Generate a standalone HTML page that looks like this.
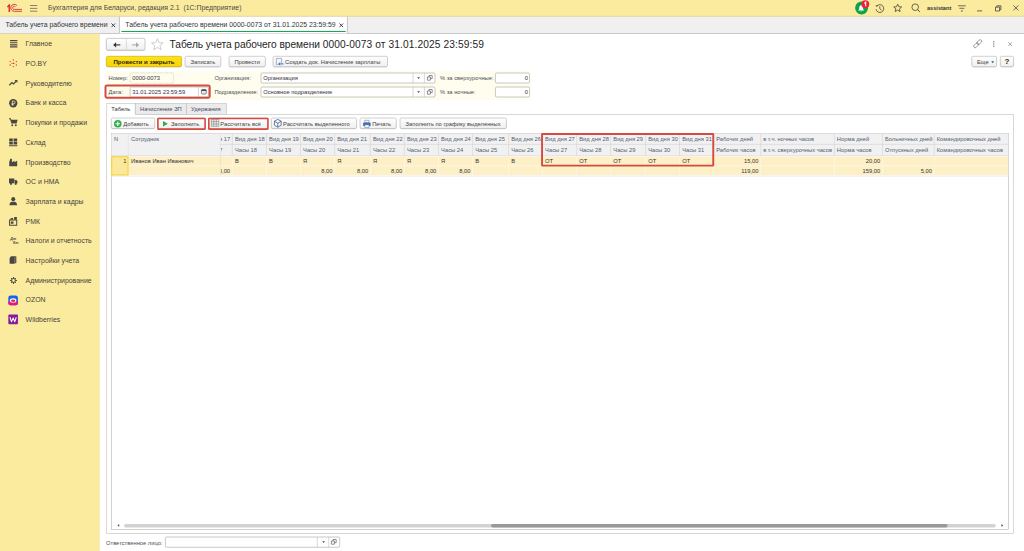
<!DOCTYPE html>
<html><head><meta charset="utf-8"><title>1C</title>
<style>
html,body{margin:0;padding:0;background:#fff;}
body{width:1024px;height:551px;overflow:hidden;position:relative;font-family:"Liberation Sans",sans-serif;}
#root{position:absolute;left:0;top:0;width:1024px;height:551px;overflow:hidden;background:#fff;}
#root div{position:absolute;box-sizing:border-box;}
.t{white-space:pre;}
svg{position:absolute;overflow:visible;}
#bgl{left:0;top:0;}
</style></head><body><div id="root">
<svg id="bgl" width="1024" height="551" viewBox="0 0 1024 551">
<defs>
<linearGradient id="bg" x1="0" y1="0" x2="0" y2="1"><stop offset="0" stop-color="#ffffff"/><stop offset="1" stop-color="#efefef"/></linearGradient>
<linearGradient id="yg" x1="0" y1="0" x2="0" y2="1"><stop offset="0" stop-color="#ffe31c"/><stop offset="1" stop-color="#f7d300"/></linearGradient>
</defs>
<rect x="0.00" y="0.00" width="1024.00" height="16.50" fill="#fbeb9f"/>
<rect x="0.00" y="16.50" width="1024.00" height="16.70" fill="#f0f0f0"/>
<rect x="119.70" y="16.70" width="227.40" height="16.50" fill="#fff"/>
<path d="M119.45 16.60L119.45 33.20" stroke="#b0b0b0" stroke-width="0.7" fill="none"/>
<path d="M347.40 16.60L347.40 33.20" stroke="#b0b0b0" stroke-width="0.7" fill="none"/>
<path d="M0.00 33.50L1024.00 33.50" stroke="#bdbdbd" stroke-width="0.8" fill="none"/>
<path d="M119.30 33.50L347.30 33.50" stroke="#e4e4e4" stroke-width="0.8" fill="none"/>
<path d="M0.00 16.30L1024.00 16.30" stroke="#dccf9b" stroke-width="0.8" fill="none"/>
<rect x="121.40" y="30.95" width="224.30" height="1.00" fill="#10a050"/>
<rect x="0.00" y="33.70" width="99.45" height="517.30" fill="#fbeb9f"/>
<path d="M99.30 33.70L99.30 551.00" stroke="#e9d98f" stroke-width="0.4" fill="none"/>
<rect x="106.40" y="39.25" width="38.50" height="11.70" fill="rgba(0,0,0,0.13)" rx="1.6"/>
<rect x="106.30" y="38.35" width="38.70" height="11.85" fill="url(#bg)" stroke="#a2a2a2" stroke-width="0.55" rx="1.5"/>
<path d="M126.40 38.70L126.40 49.90" stroke="#c4c4c4" stroke-width="0.55" fill="none"/>
<rect x="106.40" y="57.20" width="75.10" height="10.25" fill="rgba(0,0,0,0.13)" rx="1.6"/>
<rect x="106.30" y="56.30" width="75.30" height="10.40" fill="url(#yg)" stroke="#c2a000" stroke-width="0.55" rx="1.5"/>
<rect x="185.10" y="57.20" width="35.60" height="10.25" fill="rgba(0,0,0,0.13)" rx="1.6"/>
<rect x="185.00" y="56.30" width="35.80" height="10.40" fill="url(#bg)" stroke="#ababab" stroke-width="0.55" rx="1.5"/>
<rect x="229.10" y="57.20" width="36.20" height="10.25" fill="rgba(0,0,0,0.13)" rx="1.6"/>
<rect x="229.00" y="56.30" width="36.40" height="10.40" fill="url(#bg)" stroke="#ababab" stroke-width="0.55" rx="1.5"/>
<rect x="273.10" y="57.20" width="114.30" height="10.25" fill="rgba(0,0,0,0.13)" rx="1.6"/>
<rect x="273.00" y="56.30" width="114.50" height="10.40" fill="url(#bg)" stroke="#ababab" stroke-width="0.55" rx="1.5"/>
<rect x="971.90" y="57.20" width="24.60" height="10.25" fill="rgba(0,0,0,0.13)" rx="1.6"/>
<rect x="971.80" y="56.30" width="24.80" height="10.40" fill="url(#bg)" stroke="#ababab" stroke-width="0.55" rx="1.5"/>
<rect x="1000.40" y="57.20" width="13.10" height="10.25" fill="rgba(0,0,0,0.13)" rx="1.6"/>
<rect x="1000.30" y="56.30" width="13.30" height="10.40" fill="url(#bg)" stroke="#ababab" stroke-width="0.55" rx="1.5"/>
<rect x="106.30" y="71.20" width="425.10" height="28.60" fill="#fffdee"/>
<rect x="130.1" y="72.9" width="43.4" height="10.3" rx="1.3" fill="none" stroke="#b0b0a8" stroke-width="0.55" stroke-dasharray="0.6 0.6"/>
<rect x="130.10" y="87.00" width="78.30" height="10.00" fill="#fff" stroke="#9a9a9a" stroke-width="0.55" rx="1.3"/>
<path d="M198.40 87.00L198.40 97.00" stroke="#b8b8b8" stroke-width="0.55" fill="none"/>
<rect x="105.50" y="85.40" width="104.20" height="12.35" fill="none" stroke="#d64a40" stroke-width="2.0" rx="1.4"/>
<rect x="261.00" y="73.00" width="174.00" height="10.00" fill="#fff" stroke="#9a9a9a" stroke-width="0.55" rx="1.3"/>
<path d="M413.00 73.00L413.00 83.00" stroke="#b8b8b8" stroke-width="0.55" fill="none"/>
<path d="M424.40 73.00L424.40 83.00" stroke="#b8b8b8" stroke-width="0.55" fill="none"/>
<rect x="261.00" y="87.00" width="174.00" height="10.00" fill="#fff" stroke="#9a9a9a" stroke-width="0.55" rx="1.3"/>
<path d="M413.00 87.00L413.00 97.00" stroke="#b8b8b8" stroke-width="0.55" fill="none"/>
<path d="M424.40 87.00L424.40 97.00" stroke="#b8b8b8" stroke-width="0.55" fill="none"/>
<rect x="495.40" y="73.00" width="34.10" height="10.00" fill="#fff" stroke="#9a9a9a" stroke-width="0.55" rx="1.3"/>
<rect x="495.40" y="87.00" width="34.10" height="10.00" fill="#fff" stroke="#9a9a9a" stroke-width="0.55" rx="1.3"/>
<rect x="135.30" y="103.50" width="51.20" height="10.90" fill="#ebebeb" stroke="#b9b9b9" stroke-width="0.55"/>
<rect x="186.50" y="103.50" width="40.00" height="10.90" fill="#ebebeb" stroke="#b9b9b9" stroke-width="0.55"/>
<rect x="106.65" y="114.40" width="906.65" height="418.95" fill="#fff" stroke="#b9b9b9" stroke-width="0.55"/>
<rect x="106.65" y="103.50" width="28.65" height="11.70" fill="#fff"/>
<path d="M106.65 115 V103.5 H135.3 V114.4" fill="none" stroke="#b9b9b9" stroke-width="0.55"/>
<rect x="111.30" y="118.90" width="43.40" height="10.35" fill="rgba(0,0,0,0.13)" rx="1.6"/>
<rect x="111.20" y="118.00" width="43.60" height="10.50" fill="url(#bg)" stroke="#ababab" stroke-width="0.55" rx="1.5"/>
<rect x="158.10" y="118.90" width="46.80" height="10.85" fill="rgba(0,0,0,0.13)" rx="1.6"/>
<rect x="158.00" y="118.00" width="47.00" height="11.00" fill="url(#bg)" stroke="#ababab" stroke-width="0.55" rx="1.5"/>
<rect x="157.88" y="118.58" width="47.25" height="10.55" fill="none" stroke="#d64a40" stroke-width="1.55" rx="0.3"/>
<rect x="209.10" y="118.90" width="58.60" height="10.85" fill="rgba(0,0,0,0.13)" rx="1.6"/>
<rect x="209.00" y="118.00" width="58.80" height="11.00" fill="url(#bg)" stroke="#ababab" stroke-width="0.55" rx="1.5"/>
<rect x="208.78" y="118.58" width="59.15" height="10.55" fill="none" stroke="#d64a40" stroke-width="1.55" rx="0.3"/>
<rect x="271.40" y="118.90" width="85.10" height="10.35" fill="rgba(0,0,0,0.13)" rx="1.6"/>
<rect x="271.30" y="118.00" width="85.30" height="10.50" fill="url(#bg)" stroke="#ababab" stroke-width="0.55" rx="1.5"/>
<rect x="360.10" y="118.90" width="36.10" height="10.35" fill="rgba(0,0,0,0.13)" rx="1.6"/>
<rect x="360.00" y="118.00" width="36.30" height="10.50" fill="url(#bg)" stroke="#ababab" stroke-width="0.55" rx="1.5"/>
<rect x="400.10" y="118.90" width="106.20" height="10.35" fill="rgba(0,0,0,0.13)" rx="1.6"/>
<rect x="400.00" y="118.00" width="106.40" height="10.50" fill="url(#bg)" stroke="#ababab" stroke-width="0.55" rx="1.5"/>
<rect x="111.30" y="133.40" width="897.20" height="396.10" fill="#fff" stroke="#adadad" stroke-width="0.55"/>
<rect x="111.57" y="133.67" width="896.66" height="22.33" fill="#f1f1f1"/>
<rect x="111.57" y="156.00" width="896.66" height="0.70" fill="#f7f4ea"/>
<rect x="111.57" y="156.70" width="896.66" height="18.55" fill="#fdefc6"/>
<rect x="111.57" y="175.25" width="896.66" height="1.70" fill="#f3f3f3"/>
<path d="M128.30 133.70L128.30 156.00" stroke="#cfcfcf" stroke-width="0.55" fill="none" stroke-dasharray="0.7 0.6"/>
<path d="M220.40 133.70L220.40 156.00" stroke="#cfcfcf" stroke-width="0.55" fill="none" stroke-dasharray="0.7 0.6"/>
<path d="M220.40 156.00L220.40 175.25" stroke="#c9c2a8" stroke-width="0.55" fill="none" stroke-dasharray="0.7 0.6"/>
<path d="M232.30 133.70L232.30 156.00" stroke="#cfcfcf" stroke-width="0.55" fill="none"/>
<path d="M232.30 156.70L232.30 175.25" stroke="#fff8e2" stroke-width="0.8" fill="none"/>
<path d="M266.50 133.70L266.50 156.00" stroke="#cfcfcf" stroke-width="0.55" fill="none"/>
<path d="M266.50 156.70L266.50 175.25" stroke="#fff8e2" stroke-width="0.8" fill="none"/>
<path d="M300.45 133.70L300.45 156.00" stroke="#cfcfcf" stroke-width="0.55" fill="none"/>
<path d="M300.45 156.70L300.45 175.25" stroke="#fff8e2" stroke-width="0.8" fill="none"/>
<path d="M334.60 133.70L334.60 156.00" stroke="#cfcfcf" stroke-width="0.55" fill="none"/>
<path d="M334.60 156.70L334.60 175.25" stroke="#fff8e2" stroke-width="0.8" fill="none"/>
<path d="M370.40 133.70L370.40 156.00" stroke="#cfcfcf" stroke-width="0.55" fill="none"/>
<path d="M370.40 156.70L370.40 175.25" stroke="#fff8e2" stroke-width="0.8" fill="none"/>
<path d="M404.40 133.70L404.40 156.00" stroke="#cfcfcf" stroke-width="0.55" fill="none"/>
<path d="M404.40 156.70L404.40 175.25" stroke="#fff8e2" stroke-width="0.8" fill="none"/>
<path d="M438.50 133.70L438.50 156.00" stroke="#cfcfcf" stroke-width="0.55" fill="none"/>
<path d="M438.50 156.70L438.50 175.25" stroke="#fff8e2" stroke-width="0.8" fill="none"/>
<path d="M472.60 133.70L472.60 156.00" stroke="#cfcfcf" stroke-width="0.55" fill="none"/>
<path d="M472.60 156.70L472.60 175.25" stroke="#fff8e2" stroke-width="0.8" fill="none"/>
<path d="M508.65 133.70L508.65 156.00" stroke="#cfcfcf" stroke-width="0.55" fill="none"/>
<path d="M508.65 156.70L508.65 175.25" stroke="#fff8e2" stroke-width="0.8" fill="none"/>
<path d="M542.50 133.70L542.50 156.00" stroke="#cfcfcf" stroke-width="0.55" fill="none"/>
<path d="M542.50 156.70L542.50 175.25" stroke="#fff8e2" stroke-width="0.8" fill="none"/>
<path d="M576.65 133.70L576.65 156.00" stroke="#cfcfcf" stroke-width="0.55" fill="none"/>
<path d="M576.65 156.70L576.65 175.25" stroke="#fff8e2" stroke-width="0.8" fill="none"/>
<path d="M610.70 133.70L610.70 156.00" stroke="#cfcfcf" stroke-width="0.55" fill="none"/>
<path d="M610.70 156.70L610.70 175.25" stroke="#fff8e2" stroke-width="0.8" fill="none"/>
<path d="M645.55 133.70L645.55 156.00" stroke="#cfcfcf" stroke-width="0.55" fill="none"/>
<path d="M645.55 156.70L645.55 175.25" stroke="#fff8e2" stroke-width="0.8" fill="none"/>
<path d="M679.55 133.70L679.55 156.00" stroke="#cfcfcf" stroke-width="0.55" fill="none"/>
<path d="M679.55 156.70L679.55 175.25" stroke="#fff8e2" stroke-width="0.8" fill="none"/>
<path d="M713.70 133.70L713.70 156.00" stroke="#cfcfcf" stroke-width="0.55" fill="none"/>
<path d="M713.70 156.70L713.70 175.25" stroke="#fff8e2" stroke-width="0.8" fill="none"/>
<path d="M760.70 133.70L760.70 156.00" stroke="#cfcfcf" stroke-width="0.55" fill="none"/>
<path d="M760.70 156.70L760.70 175.25" stroke="#fff8e2" stroke-width="0.8" fill="none"/>
<path d="M834.40 133.70L834.40 156.00" stroke="#cfcfcf" stroke-width="0.55" fill="none"/>
<path d="M834.40 156.70L834.40 175.25" stroke="#fff8e2" stroke-width="0.8" fill="none"/>
<path d="M882.50 133.70L882.50 156.00" stroke="#cfcfcf" stroke-width="0.55" fill="none"/>
<path d="M882.50 156.70L882.50 175.25" stroke="#fff8e2" stroke-width="0.8" fill="none"/>
<path d="M934.30 133.70L934.30 156.00" stroke="#cfcfcf" stroke-width="0.55" fill="none"/>
<path d="M934.30 156.70L934.30 175.25" stroke="#fff8e2" stroke-width="0.8" fill="none"/>
<path d="M220.40 144.40L1008.20 144.40" stroke="#cfcfcf" stroke-width="0.55" fill="none"/>
<path d="M111.60 155.50L1008.20 155.50" stroke="#dcdcdc" stroke-width="0.55" fill="none"/>
<path d="M128.30 165.85L1008.20 165.85" stroke="#fef5d9" stroke-width="1.3" fill="none"/>
<rect x="111.75" y="156.75" width="16.30" height="18.20" fill="#fbe89c" stroke="#f8d017" stroke-width="0.9"/>
<rect x="542.05" y="133.95" width="171.20" height="31.70" fill="none" stroke="#d64a40" stroke-width="1.9" rx="0.4"/>
<rect x="124.00" y="524.05" width="871.80" height="3.55" fill="#d2d2d2" rx="1.8"/>
<rect x="491.00" y="524.05" width="456.60" height="3.55" fill="#999" rx="1.8"/>
<rect x="165.40" y="537.00" width="174.30" height="10.25" fill="#fff" stroke="#9a9a9a" stroke-width="0.55" rx="1.3"/>
<path d="M317.30 537.00L317.30 547.25" stroke="#b8b8b8" stroke-width="0.55" fill="none"/>
<path d="M328.70 537.00L328.70 547.25" stroke="#b8b8b8" stroke-width="0.55" fill="none"/>
</svg>
<svg style="left:0;top:0" width="40" height="17" viewBox="0 0 40 17">
<path d="M6.9 6.7 L8.8 4.2 H10.1 V11.9 H8.5 V6.9 L7.6 7.6 Z" fill="#d9363a"/>
<path d="M16.98 5.55 A3.5 3.5 0 1 0 14.3 11.3 H22" stroke="#d9363a" stroke-width="0.95" fill="none"/>
<path d="M15.53 6.77 A1.6 1.6 0 1 0 14.3 9.4 H22" stroke="#d9363a" stroke-width="0.95" fill="none"/>
<path d="M30 5.5H37.3M30 8.4H37.3M30 11.2H37.3" stroke="#6e6650" stroke-width="0.8"/>
</svg>
<div class="t" style="left:48.00px;top:3px;font-size:6.93px;line-height:10px;color:#4a4a44;font-weight:normal;">Бухгалтерия для Беларуси, редакция 2.1  (1С:Предприятие)</div>
<svg style="left:0;top:0" width="1024" height="17" viewBox="0 0 1024 17">
<circle cx="861.6" cy="7.95" r="6.5" fill="#12a04b"/>
<path d="M861.1 5.2 C859.6 5.2 859.3 6.8 859.3 8.0 C859.3 9.2 858.6 9.8 858.0 10.4 H864.3 C863.7 9.8 863.0 9.2 863.0 8.0 C863.0 6.8 862.6 5.2 861.1 5.2 Z M860.3 11.0 A0.9 0.9 0 0 0 861.9 11.0 Z" fill="#fff"/>
<circle cx="865.35" cy="4.2" r="3.85" fill="#ee2038"/>
<path d="M864.3 3.4 L865.7 2.2 V6.3" stroke="#fff" stroke-width="1.05" fill="none"/>
<g transform="translate(875,3.8)"><path d="M1.6 2.6 A3.9 3.9 0 1 1 1.0 5.4" stroke="#463f33" stroke-width="0.8" fill="none"/>
<path d="M0.4 1.4 L1.7 3.0 L3.3 1.9 Z" fill="#463f33"/>
<path d="M4.8 2.6 V4.9 L6.5 6.3" stroke="#463f33" stroke-width="0.8" fill="none"/></g>
<g transform="translate(893.1,3.55) scale(0.88)"><path d="M5.2 0.7 L6.5 3.6 L9.7 3.9 L7.3 6.0 L8.0 9.1 L5.2 7.5 L2.4 9.1 L3.1 6.0 L0.7 3.9 L3.9 3.6 Z" stroke="#463f33" stroke-width="0.9" fill="none" stroke-linejoin="round"/></g>
</svg>
<svg style="left:911px;top:3.2px" width="10" height="10" viewBox="0 0 10 10">
<circle cx="4.2" cy="4.2" r="3.3" stroke="#444" stroke-width="0.8" fill="none"/>
<path d="M6.6 6.6 L8.8 8.8" stroke="#444" stroke-width="1"/>
</svg>
<div class="t" style="left:927.00px;top:4px;font-size:5.6px;line-height:8px;color:#333;font-weight:bold;">assistant</div>
<svg style="left:957.8px;top:5.0px" width="9" height="9" viewBox="0 0 9 9">
<path d="M0 0.8H7.8M1.4 3.3H6.4" stroke="#444" stroke-width="0.75"/>
<path d="M2.8 5.4 H5.0 L3.9 6.9 Z" fill="#444"/>
</svg>
<svg style="left:977px;top:9.8px" width="6" height="2" viewBox="0 0 6 2"><path d="M0 0.9H5.2" stroke="#444" stroke-width="0.8"/></svg>
<svg style="left:994.6px;top:4.6px" width="7" height="7" viewBox="0 0 7 7">
<path d="M0.5 2.1 H4.6 V6.0 H0.5 Z M1.8 2.1 V0.8 H5.9 V4.7 H4.6" stroke="#444" stroke-width="0.8" fill="none"/></svg>
<svg style="left:1013px;top:5px" width="6" height="6" viewBox="0 0 6 6"><path d="M0.4 0.4 L5.4 5.4 M5.4 0.4 L0.4 5.4" stroke="#444" stroke-width="0.8"/></svg>
<div class="t" style="left:5.40px;top:20px;font-size:6.87px;line-height:10px;color:#333;font-weight:normal;">Табель учета рабочего времени</div>
<svg style="left:110.9px;top:22.5px" width="5" height="5" viewBox="0 0 5 5"><path d="M0.5 0.5L4.1 4.1M4.1 0.5L0.5 4.1" stroke="#3a3a3a" stroke-width="0.95"/></svg>
<div class="t" style="left:125.30px;top:20px;font-size:6.87px;line-height:10px;color:#333;font-weight:normal;">Табель учета рабочего времени 0000-0073 от 31.01.2025 23:59:59</div>
<svg style="left:338.9px;top:22.7px" width="5" height="5" viewBox="0 0 5 5"><path d="M0.5 0.5L4.1 4.1M4.1 0.5L0.5 4.1" stroke="#3a3a3a" stroke-width="0.95"/></svg>
<svg style="left:9.90px;top:40.00px" width="8.00" height="8.00" viewBox="0 0 8 8"><path d="M0 0.6H7.4M0 2.7H7.4M0 4.8H7.4M0 6.9H7.4" stroke="#4a4742" stroke-width="1.15"/></svg>
<div class="t" style="left:25.60px;top:39px;font-size:6.93px;line-height:10px;color:#45433c;font-weight:normal;">Главное</div>
<svg style="left:9.14px;top:59.23px" width="8.96" height="8.96" viewBox="0 0 8 8"><g fill="#d23b30"><circle cx="3.8" cy="3.8" r="0.75"/><circle cx="3.8" cy="0.9" r="0.6"/><circle cx="3.8" cy="6.8" r="0.6"/><circle cx="1" cy="2.3" r="0.6"/><circle cx="6.6" cy="2.3" r="0.6"/><circle cx="1" cy="5.4" r="0.6"/><circle cx="6.6" cy="5.4" r="0.6"/><circle cx="2.4" cy="3.8" r="0.4"/><circle cx="5.2" cy="3.8" r="0.4"/></g></svg>
<div class="t" style="left:25.60px;top:59px;font-size:6.93px;line-height:10px;color:#45433c;font-weight:normal;">PO.BY</div>
<svg style="left:9.14px;top:78.92px" width="8.96" height="8.96" viewBox="0 0 8 8"><path d="M0.3 5.6 L2.6 3.2 L4.0 4.4 L6.8 1.6" stroke="#4a4742" stroke-width="1.1" fill="none"/><path d="M4.9 1.0 H7.5 V3.6 Z" fill="#4a4742"/></svg>
<div class="t" style="left:25.60px;top:79px;font-size:6.93px;line-height:10px;color:#45433c;font-weight:normal;">Руководителю</div>
<svg style="left:9.14px;top:98.61px" width="8.96" height="8.96" viewBox="0 0 8 8"><circle cx="3.8" cy="3.8" r="3.7" fill="#4a4742"/><path d="M3.0 6.0 V1.9 H4.3 A1.15 1.15 0 0 1 4.3 4.2 H2.3 M2.3 5.1 H4.3" stroke="#fbeb9f" stroke-width="0.7" fill="none"/></svg>
<div class="t" style="left:25.60px;top:98px;font-size:6.93px;line-height:10px;color:#45433c;font-weight:normal;">Банк и касса</div>
<svg style="left:9.14px;top:118.30px" width="8.96" height="8.96" viewBox="0 0 8 8"><path d="M0 0.7 H1.3 L1.8 2.2" stroke="#4a4742" stroke-width="0.9" fill="none"/><path d="M1.2 1.5 H7.7 L6.8 5.0 H2.1 Z" fill="#4a4742"/><circle cx="2.9" cy="6.5" r="0.85" fill="#4a4742"/><circle cx="6.1" cy="6.5" r="0.85" fill="#4a4742"/></svg>
<div class="t" style="left:25.60px;top:118px;font-size:6.93px;line-height:10px;color:#45433c;font-weight:normal;">Покупки и продажи</div>
<svg style="left:9.14px;top:137.99px" width="8.96" height="8.96" viewBox="0 0 8 8"><path d="M0.2 0.4H3.4V2.8H0.2Z M4.1 0.4H7.3V2.8H4.1Z M0.2 3.4H3.4V5.8H0.2Z M4.1 3.4H7.3V5.8H4.1Z M0 6.5H7.5V7.4H0Z" fill="#4a4742"/></svg>
<div class="t" style="left:25.60px;top:138px;font-size:6.93px;line-height:10px;color:#45433c;font-weight:normal;">Склад</div>
<svg style="left:9.14px;top:157.68px" width="8.96" height="8.96" viewBox="0 0 8 8"><path d="M0.2 7.3 V3.6 L1.2 0.6 H2.6 V3.8 L4.8 2.4 V3.8 L7.3 2.4 V7.3 Z" fill="#4a4742"/></svg>
<div class="t" style="left:25.60px;top:158px;font-size:6.93px;line-height:10px;color:#45433c;font-weight:normal;">Производство</div>
<svg style="left:9.14px;top:177.37px" width="8.96" height="8.96" viewBox="0 0 8 8"><path d="M0 1.4 H4.8 V5.6 H0 Z M5.2 2.6 H6.6 L7.6 4.0 V5.6 H5.2 Z" fill="#4a4742"/><circle cx="1.8" cy="6.1" r="1" fill="#4a4742"/><circle cx="6.0" cy="6.1" r="1" fill="#4a4742"/></svg>
<div class="t" style="left:25.60px;top:177px;font-size:6.93px;line-height:10px;color:#45433c;font-weight:normal;">ОС и НМА</div>
<svg style="left:9.14px;top:197.06px" width="8.96" height="8.96" viewBox="0 0 8 8"><circle cx="3.8" cy="1.9" r="1.8" fill="#4a4742"/><path d="M0.4 7.3 C0.4 4.6 2.2 4.2 3.8 4.2 C5.4 4.2 7.2 4.6 7.2 7.3 Z" fill="#4a4742"/></svg>
<div class="t" style="left:25.60px;top:197px;font-size:6.93px;line-height:10px;color:#45433c;font-weight:normal;">Зарплата и кадры</div>
<svg style="left:9.14px;top:216.75px" width="8.96" height="8.96" viewBox="0 0 8 8"><path d="M0.5 2.6 H6.9 V7.4 H0.5 Z" stroke="#4a4742" stroke-width="0.9" fill="none"/><path d="M1.4 2.4 V1.0 H3.6 V2.4 M4.6 0 H7.0 V2.4 H4.6Z M1.6 4 H4 V6 H1.6Z" fill="#4a4742"/></svg>
<div class="t" style="left:25.60px;top:217px;font-size:6.93px;line-height:10px;color:#45433c;font-weight:normal;">РМК</div>
<svg style="left:9.60px;top:236.90px" width="8.00" height="8.00" viewBox="0 0 8 8"><text x="0.3" y="3.4" font-size="3.6" font-family="Liberation Sans" font-weight="bold" font-style="italic" fill="#4a4742">Дт</text><text x="3.0" y="7.4" font-size="3.6" font-family="Liberation Sans" font-weight="bold" font-style="italic" fill="#4a4742">Кт</text></svg>
<div class="t" style="left:25.60px;top:236px;font-size:6.93px;line-height:10px;color:#45433c;font-weight:normal;">Налоги и отчетность</div>
<svg style="left:9.41px;top:256.40px" width="8.40" height="8.40" viewBox="0 0 8 8"><path d="M0.6 1.8 L2.0 0.3 H7.0 V6.0 L5.6 7.5 H0.6 Z" fill="#4a4742"/><path d="M5.6 1.8 V7.5 M5.6 1.8 L7.0 0.3" stroke="#fbeb9f" stroke-width="0.35"/></svg>
<div class="t" style="left:25.60px;top:256px;font-size:6.93px;line-height:10px;color:#45433c;font-weight:normal;">Настройки учета</div>
<svg style="left:9.90px;top:276.58px" width="7.36" height="7.36" viewBox="0 0 8 8"><circle cx="3.8" cy="3.8" r="2.1" stroke="#4a4742" stroke-width="1.1" fill="none"/><path d="M3.8 0 V1.4 M3.8 6.2 V7.6 M0 3.8 H1.4 M6.2 3.8 H7.6 M1.1 1.1 L2.1 2.1 M5.5 5.5 L6.5 6.5 M1.1 6.5 L2.1 5.5 M5.5 2.1 L6.5 1.1" stroke="#4a4742" stroke-width="1.05"/></svg>
<div class="t" style="left:25.60px;top:276px;font-size:6.93px;line-height:10px;color:#45433c;font-weight:normal;">Администрирование</div>
<svg style="left:9.14px;top:295.51px" width="8.96" height="8.96" viewBox="0 0 8 8"><rect x="-0.6" y="-0.4" width="8.6" height="8.6" rx="2" fill="#1565e6"/><path d="M-0.6 5.2 H8 V6.2 A2 2 0 0 1 6 8.2 H1.4 A2 2 0 0 1 -0.6 6.2Z" fill="#f1117e"/><ellipse cx="3.7" cy="4.1" rx="2.9" ry="2.0" fill="#fff"/><ellipse cx="3.7" cy="4.3" rx="1.9" ry="1.1" fill="#e8283c"/></svg>
<div class="t" style="left:25.60px;top:295px;font-size:6.93px;line-height:10px;color:#45433c;font-weight:normal;">OZON</div>
<svg style="left:9.14px;top:315.20px" width="8.96" height="8.96" viewBox="0 0 8 8"><rect x="-0.6" y="-0.4" width="8.6" height="8.6" rx="0.8" fill="#8a1a9b"/><path d="M0.9 2.0 L2.2 6.0 L3.7 2.6 L5.2 6.0 L6.5 2.0" stroke="#fff" stroke-width="0.9" fill="none" stroke-linejoin="round"/></svg>
<div class="t" style="left:25.60px;top:315px;font-size:6.93px;line-height:10px;color:#45433c;font-weight:normal;">Wildberries</div>
<svg style="left:112.5px;top:41.6px" width="8" height="6" viewBox="0 0 8 6"><path d="M7.3 2.9 H1.2" stroke="#3a3530" stroke-width="1.15"/><path d="M3.1 0.2 L0.1 2.9 L3.1 5.6 Z" fill="#3a3530"/></svg>
<svg style="left:132px;top:41.6px" width="8" height="6" viewBox="0 0 8 6"><path d="M0.1 2.9 H5.6" stroke="#a3a3a3" stroke-width="1.0"/><path d="M4.1 0.3 L7.0 2.9 L4.1 5.5 Z" fill="#a3a3a3"/></svg>
<svg style="left:151.2px;top:38.1px" width="12.9" height="12.9" viewBox="0 0 12 12"><path d="M5.9 0.7 L7.4 4.3 L11.3 4.6 L8.3 7.1 L9.3 10.9 L5.9 8.8 L2.5 10.9 L3.5 7.1 L0.5 4.6 L4.4 4.3 Z" stroke="#bdbdbd" stroke-width="0.68" fill="#fff" stroke-linejoin="round"/></svg>
<div class="t" style="left:169.60px;top:38px;font-size:10.2px;line-height:14px;color:#1e1e1e;font-weight:normal;"><span style="letter-spacing:-0.047px">Табель учета рабочего времени </span><span style="letter-spacing:0.106px">0000-0073 от 31.01.2025 23:59:59</span></div>
<svg style="left:973.4px;top:39.4px" width="10" height="10" viewBox="0 0 10 10">
<g transform="rotate(-45 4.7 4.7)" fill="none" stroke="#6e6e6e" stroke-width="0.65">
<rect x="-0.3" y="3.2" width="5.6" height="3.0" rx="1.5"/><rect x="4.1" y="3.2" width="5.6" height="3.0" rx="1.5"/></g></svg>
<svg style="left:993px;top:41px" width="2" height="7" viewBox="0 0 2 7"><path d="M0.8 0.2V1.6M0.8 2.4V3.8M0.8 4.6V6" stroke="#666" stroke-width="0.9"/></svg>
<svg style="left:1007.8px;top:42px" width="5" height="5" viewBox="0 0 5 5"><path d="M0.3 0.3L4 4M4 0.3L0.3 4" stroke="#777" stroke-width="0.65"/></svg>
<div class="t" style="left:106.30px;width:75.30px;top:58px;font-size:6.1px;line-height:8px;color:#2a2410;font-weight:bold;text-align:center;">Провести и закрыть</div>
<div class="t" style="left:185.00px;width:35.80px;top:58px;font-size:5.78px;line-height:8px;color:#3f3f3f;font-weight:normal;text-align:center;">Записать</div>
<div class="t" style="left:229.00px;width:36.40px;top:58px;font-size:5.78px;line-height:8px;color:#3f3f3f;font-weight:normal;text-align:center;">Провести</div>
<div class="t" style="left:285.00px;top:58px;font-size:5.78px;line-height:8px;color:#3f3f3f;font-weight:normal;">Создать док. Начисление зарплаты</div>
<svg style="left:275.6px;top:57.6px" width="8" height="8" viewBox="0 0 8 8"><path d="M0.4 0.4 H5.6 V5.0 M0.4 0.4 V6.6 H2.4" stroke="#8a97a8" stroke-width="0.7" fill="#f4f7fb"/><path d="M7.6 5.9 H3.0" stroke="#1769d6" stroke-width="0.9"/><path d="M4.2 4.6 L2.6 5.9 L4.2 7.2" stroke="#1769d6" stroke-width="0.9" fill="none"/></svg>
<div class="t" style="left:977.00px;top:58px;font-size:5.78px;line-height:8px;color:#3f3f3f;font-weight:normal;">Еще</div>
<svg style="left:990.6px;top:60.6px" width="4" height="3" viewBox="0 0 4 3"><path d="M0.2 0.3 H3.2 L1.7 2.2 Z" fill="#555"/></svg>
<div class="t" style="left:1000.30px;width:13.30px;top:57px;font-size:8px;line-height:10px;color:#2b2418;font-weight:bold;text-align:center;">?</div>
<div class="t" style="left:108.50px;top:74px;font-size:5.78px;line-height:8px;color:#4a4f5a;font-weight:normal;">Номер:</div>
<div class="t" style="left:132.30px;top:74px;font-size:5.78px;line-height:8px;color:#333;font-weight:normal;">0000-0073</div>
<div class="t" style="left:108.50px;top:88px;font-size:5.78px;line-height:8px;color:#4a4f5a;font-weight:normal;">Дата:</div>
<div class="t" style="left:132.30px;top:88px;font-size:5.78px;line-height:8px;color:#333;font-weight:normal;">31.01.2025 23:59:59</div>
<svg style="left:201.3px;top:89.30px" width="6" height="6" viewBox="0 0 6 6"><rect x="0.4" y="0.4" width="4.9" height="4.6" rx="0.9" fill="#e9e9e9" stroke="#5a5a5a" stroke-width="0.7"/><path d="M0.4 1.3 A0.9 0.9 0 0 1 1.3 0.4 H4.4 A0.9 0.9 0 0 1 5.3 1.3 V1.9 H0.4 Z" fill="#4a4a4a"/></svg>
<div class="t" style="left:214.40px;top:74px;font-size:5.78px;line-height:8px;color:#4a4f5a;font-weight:normal;">Организация:</div>
<div class="t" style="left:263.20px;top:74px;font-size:5.78px;line-height:8px;color:#333;font-weight:normal;">Организация</div>
<svg style="left:417.30px;top:77.20px" width="4" height="3" viewBox="0 0 4 3"><path d="M0.2 0.2 H3.0 L1.6 2.0 Z" fill="#444"/></svg>
<svg style="left:427.00px;top:75.20px" width="6" height="6" viewBox="0 0 6 6"><path d="M0.4 2.0 H3.4 V5.2 H0.4 Z M2.0 2.0 V0.5 H5.2 V3.6 H3.4" stroke="#555" stroke-width="0.65" fill="none"/></svg>
<div class="t" style="left:214.40px;top:88px;font-size:5.78px;line-height:8px;color:#4a4f5a;font-weight:normal;">Подразделение:</div>
<div class="t" style="left:263.20px;top:88px;font-size:5.78px;line-height:8px;color:#333;font-weight:normal;">Основное подразделение</div>
<svg style="left:417.30px;top:91.20px" width="4" height="3" viewBox="0 0 4 3"><path d="M0.2 0.2 H3.0 L1.6 2.0 Z" fill="#444"/></svg>
<svg style="left:427.00px;top:89.20px" width="6" height="6" viewBox="0 0 6 6"><path d="M0.4 2.0 H3.4 V5.2 H0.4 Z M2.0 2.0 V0.5 H5.2 V3.6 H3.4" stroke="#555" stroke-width="0.65" fill="none"/></svg>
<div class="t" style="left:440.00px;top:74px;font-size:5.78px;line-height:8px;color:#4a4f5a;font-weight:normal;">% за сверхурочные:</div>
<div class="t" style="right:496.10px;top:74px;font-size:5.78px;line-height:8px;color:#333;font-weight:normal;text-align:right;">0</div>
<div class="t" style="left:440.00px;top:88px;font-size:5.78px;line-height:8px;color:#4a4f5a;font-weight:normal;">% за ночные:</div>
<div class="t" style="right:496.10px;top:88px;font-size:5.78px;line-height:8px;color:#333;font-weight:normal;text-align:right;">0</div>
<div class="t" style="left:111.20px;top:105px;font-size:5.78px;line-height:8px;color:#333;font-weight:normal;">Табель</div>
<div class="t" style="left:140.00px;top:105px;font-size:5.78px;line-height:8px;color:#3f4860;font-weight:normal;">Начисление ЗП</div>
<div class="t" style="left:191.10px;top:105px;font-size:5.78px;line-height:8px;color:#3f4860;font-weight:normal;">Удержания</div>
<div class="t" style="left:123.20px;top:120px;font-size:5.78px;line-height:8px;color:#3f3f3f;font-weight:normal;">Добавить</div>
<svg style="left:113.95px;top:119.6px" width="8" height="8" viewBox="0 0 8 8"><circle cx="3.8" cy="3.8" r="3.75" fill="#2fae4a"/><path d="M3.8 1.6V6M1.6 3.8H6" stroke="#fff" stroke-width="1.1"/></svg>
<div class="t" style="left:170.90px;top:120px;font-size:5.78px;line-height:8px;color:#3f3f3f;font-weight:normal;">Заполнить</div>
<svg style="left:163.1px;top:121.1px" width="5" height="6" viewBox="0 0 5 6"><path d="M0 0.1 L4.9 2.75 L0 5.4 Z" fill="#2fae4a"/></svg>
<div class="t" style="left:220.30px;top:120px;font-size:5.78px;line-height:8px;color:#3f3f3f;font-weight:normal;">Рассчитать всё</div>
<svg style="left:210.9px;top:118.9px" width="8" height="8" viewBox="0 0 8 8"><path d="M0 0.4H8V7.4H0Z" fill="#ececec"/><path d="M0 0.5H8M0 2.6H8M0 5H8M0 7.3H8M0.3 0.4V7.4M2.8 0.4V7.4M5.3 0.4V7.4M7.8 0.4V7.4" stroke="#777" stroke-width="0.5"/></svg>
<div class="t" style="left:283.00px;top:120px;font-size:5.78px;line-height:8px;color:#3f3f3f;font-weight:normal;">Рассчитать выделенного</div>
<svg style="left:273.6px;top:119.2px" width="8" height="9" viewBox="0 0 8 9"><path d="M3.8 0.4 L7.2 2.2 V6.2 L3.8 8.2 L0.4 6.2 V2.2 Z M0.4 2.2 L3.8 4.2 L7.2 2.2 M3.8 4.2 V8.2" stroke="#3f5f8a" stroke-width="0.8" fill="#f5f8fc" stroke-linejoin="round"/></svg>
<div class="t" style="left:372.20px;top:120px;font-size:5.78px;line-height:8px;color:#3f3f3f;font-weight:normal;">Печать</div>
<svg style="left:362.8px;top:119.6px" width="8" height="8" viewBox="0 0 8 8"><path d="M1.8 0.3 H6.0 V2.6 H1.8 Z" fill="#fff" stroke="#3e6aa8" stroke-width="0.5"/><path d="M0.2 2.6 H7.6 V6.0 H0.2 Z" fill="#3e6aa8"/><path d="M1.8 4.8 H6.0 V7.4 H1.8 Z" fill="#fff" stroke="#3e6aa8" stroke-width="0.5"/></svg>
<div class="t" style="left:405.60px;top:120px;font-size:5.78px;line-height:8px;color:#3f3f3f;font-weight:normal;">Заполнить по графику выделенных</div>
<div class="t" style="left:114.00px;top:135px;font-size:5.78px;line-height:8px;color:#535d73;font-weight:normal;">N</div>
<div class="t" style="left:131.00px;top:135px;font-size:5.78px;line-height:8px;color:#535d73;font-weight:normal;">Сотрудник</div>
<div style="left:220.5px;top:133px;width:11.75px;height:43px;overflow:hidden;"><div class="t" style="left:-20.06px;top:2px;font-size:5.78px;line-height:8px;color:#535d73">Вид дня 17</div><div class="t" style="left:-20.06px;top:13px;font-size:5.78px;line-height:8px;color:#535d73">Часы 17</div><div class="t" style="right:2.2px;top:34px;font-size:5.78px;line-height:8px;color:#333">8,00</div></div>
<div class="t" style="left:234.90px;top:135px;font-size:5.78px;line-height:8px;color:#535d73;font-weight:normal;">Вид дня 18</div>
<div class="t" style="left:234.90px;top:146px;font-size:5.78px;line-height:8px;color:#535d73;font-weight:normal;">Часы 18</div>
<div class="t" style="left:234.90px;top:157px;font-size:5.78px;line-height:8px;color:#333;font-weight:normal;">В</div>
<div class="t" style="left:269.10px;top:135px;font-size:5.78px;line-height:8px;color:#535d73;font-weight:normal;">Вид дня 19</div>
<div class="t" style="left:269.10px;top:146px;font-size:5.78px;line-height:8px;color:#535d73;font-weight:normal;">Часы 19</div>
<div class="t" style="left:269.10px;top:157px;font-size:5.78px;line-height:8px;color:#333;font-weight:normal;">В</div>
<div class="t" style="left:303.05px;top:135px;font-size:5.78px;line-height:8px;color:#535d73;font-weight:normal;">Вид дня 20</div>
<div class="t" style="left:303.05px;top:146px;font-size:5.78px;line-height:8px;color:#535d73;font-weight:normal;">Часы 20</div>
<div class="t" style="left:303.05px;top:157px;font-size:5.78px;line-height:8px;color:#333;font-weight:normal;">Я</div>
<div class="t" style="right:691.60px;top:167px;font-size:5.78px;line-height:8px;color:#333;font-weight:normal;text-align:right;">8,00</div>
<div class="t" style="left:337.20px;top:135px;font-size:5.78px;line-height:8px;color:#535d73;font-weight:normal;">Вид дня 21</div>
<div class="t" style="left:337.20px;top:146px;font-size:5.78px;line-height:8px;color:#535d73;font-weight:normal;">Часы 21</div>
<div class="t" style="left:337.20px;top:157px;font-size:5.78px;line-height:8px;color:#333;font-weight:normal;">Я</div>
<div class="t" style="right:655.80px;top:167px;font-size:5.78px;line-height:8px;color:#333;font-weight:normal;text-align:right;">8,00</div>
<div class="t" style="left:373.00px;top:135px;font-size:5.78px;line-height:8px;color:#535d73;font-weight:normal;">Вид дня 22</div>
<div class="t" style="left:373.00px;top:146px;font-size:5.78px;line-height:8px;color:#535d73;font-weight:normal;">Часы 22</div>
<div class="t" style="left:373.00px;top:157px;font-size:5.78px;line-height:8px;color:#333;font-weight:normal;">Я</div>
<div class="t" style="right:621.80px;top:167px;font-size:5.78px;line-height:8px;color:#333;font-weight:normal;text-align:right;">8,00</div>
<div class="t" style="left:407.00px;top:135px;font-size:5.78px;line-height:8px;color:#535d73;font-weight:normal;">Вид дня 23</div>
<div class="t" style="left:407.00px;top:146px;font-size:5.78px;line-height:8px;color:#535d73;font-weight:normal;">Часы 23</div>
<div class="t" style="left:407.00px;top:157px;font-size:5.78px;line-height:8px;color:#333;font-weight:normal;">Я</div>
<div class="t" style="right:587.70px;top:167px;font-size:5.78px;line-height:8px;color:#333;font-weight:normal;text-align:right;">8,00</div>
<div class="t" style="left:441.10px;top:135px;font-size:5.78px;line-height:8px;color:#535d73;font-weight:normal;">Вид дня 24</div>
<div class="t" style="left:441.10px;top:146px;font-size:5.78px;line-height:8px;color:#535d73;font-weight:normal;">Часы 24</div>
<div class="t" style="left:441.10px;top:157px;font-size:5.78px;line-height:8px;color:#333;font-weight:normal;">Я</div>
<div class="t" style="right:553.60px;top:167px;font-size:5.78px;line-height:8px;color:#333;font-weight:normal;text-align:right;">8,00</div>
<div class="t" style="left:475.20px;top:135px;font-size:5.78px;line-height:8px;color:#535d73;font-weight:normal;">Вид дня 25</div>
<div class="t" style="left:475.20px;top:146px;font-size:5.78px;line-height:8px;color:#535d73;font-weight:normal;">Часы 25</div>
<div class="t" style="left:475.20px;top:157px;font-size:5.78px;line-height:8px;color:#333;font-weight:normal;">В</div>
<div class="t" style="left:511.25px;top:135px;font-size:5.78px;line-height:8px;color:#535d73;font-weight:normal;">Вид дня 26</div>
<div class="t" style="left:511.25px;top:146px;font-size:5.78px;line-height:8px;color:#535d73;font-weight:normal;">Часы 26</div>
<div class="t" style="left:511.25px;top:157px;font-size:5.78px;line-height:8px;color:#333;font-weight:normal;">В</div>
<div class="t" style="left:545.10px;top:135px;font-size:5.78px;line-height:8px;color:#535d73;font-weight:normal;">Вид дня 27</div>
<div class="t" style="left:545.10px;top:146px;font-size:5.78px;line-height:8px;color:#535d73;font-weight:normal;">Часы 27</div>
<div class="t" style="left:545.10px;top:157px;font-size:5.78px;line-height:8px;color:#333;font-weight:normal;">ОТ</div>
<div class="t" style="left:579.25px;top:135px;font-size:5.78px;line-height:8px;color:#535d73;font-weight:normal;">Вид дня 28</div>
<div class="t" style="left:579.25px;top:146px;font-size:5.78px;line-height:8px;color:#535d73;font-weight:normal;">Часы 28</div>
<div class="t" style="left:579.25px;top:157px;font-size:5.78px;line-height:8px;color:#333;font-weight:normal;">ОТ</div>
<div class="t" style="left:613.30px;top:135px;font-size:5.78px;line-height:8px;color:#535d73;font-weight:normal;">Вид дня 29</div>
<div class="t" style="left:613.30px;top:146px;font-size:5.78px;line-height:8px;color:#535d73;font-weight:normal;">Часы 29</div>
<div class="t" style="left:613.30px;top:157px;font-size:5.78px;line-height:8px;color:#333;font-weight:normal;">ОТ</div>
<div class="t" style="left:648.15px;top:135px;font-size:5.78px;line-height:8px;color:#535d73;font-weight:normal;">Вид дня 30</div>
<div class="t" style="left:648.15px;top:146px;font-size:5.78px;line-height:8px;color:#535d73;font-weight:normal;">Часы 30</div>
<div class="t" style="left:648.15px;top:157px;font-size:5.78px;line-height:8px;color:#333;font-weight:normal;">ОТ</div>
<div class="t" style="left:682.15px;top:135px;font-size:5.78px;line-height:8px;color:#535d73;font-weight:normal;">Вид дня 31</div>
<div class="t" style="left:682.15px;top:146px;font-size:5.78px;line-height:8px;color:#535d73;font-weight:normal;">Часы 31</div>
<div class="t" style="left:682.15px;top:157px;font-size:5.78px;line-height:8px;color:#333;font-weight:normal;">ОТ</div>
<div class="t" style="left:716.15px;top:135px;font-size:5.78px;line-height:8px;color:#535d73;font-weight:normal;">Рабочих дней</div>
<div class="t" style="left:716.15px;top:146px;font-size:5.78px;line-height:8px;color:#535d73;font-weight:normal;">Рабочих часов</div>
<div class="t" style="right:265.60px;top:157px;font-size:5.78px;line-height:8px;color:#333;font-weight:normal;text-align:right;">15,00</div>
<div class="t" style="right:265.60px;top:167px;font-size:5.78px;line-height:8px;color:#333;font-weight:normal;text-align:right;">119,00</div>
<div class="t" style="left:763.15px;top:135px;font-size:5.78px;line-height:8px;color:#535d73;font-weight:normal;">в т.ч. ночных часов</div>
<div class="t" style="left:763.15px;top:146px;font-size:5.78px;line-height:8px;color:#535d73;font-weight:normal;">в т.ч. сверхурочных часов</div>
<div class="t" style="left:836.85px;top:135px;font-size:5.78px;line-height:8px;color:#535d73;font-weight:normal;">Норма дней</div>
<div class="t" style="left:836.85px;top:146px;font-size:5.78px;line-height:8px;color:#535d73;font-weight:normal;">Норма часов</div>
<div class="t" style="right:143.80px;top:157px;font-size:5.78px;line-height:8px;color:#333;font-weight:normal;text-align:right;">20,00</div>
<div class="t" style="right:143.80px;top:167px;font-size:5.78px;line-height:8px;color:#333;font-weight:normal;text-align:right;">159,00</div>
<div class="t" style="left:884.95px;top:135px;font-size:5.78px;line-height:8px;color:#535d73;font-weight:normal;">Больничных дней</div>
<div class="t" style="left:884.95px;top:146px;font-size:5.78px;line-height:8px;color:#535d73;font-weight:normal;">Отпускных дней</div>
<div class="t" style="right:92.00px;top:167px;font-size:5.78px;line-height:8px;color:#333;font-weight:normal;text-align:right;">5,00</div>
<div class="t" style="left:936.75px;top:135px;font-size:5.78px;line-height:8px;color:#535d73;font-weight:normal;">Командировочных дней</div>
<div class="t" style="left:936.75px;top:146px;font-size:5.78px;line-height:8px;color:#535d73;font-weight:normal;">Командировочных часов</div>
<div class="t" style="right:897.60px;top:157px;font-size:5.78px;line-height:8px;color:#333;font-weight:normal;text-align:right;">1</div>
<div class="t" style="left:131.00px;top:157px;font-size:5.78px;line-height:8px;color:#333;font-weight:normal;">Иванов Иван Иванович</div>
<svg style="left:116.6px;top:524.4px" width="3" height="3" viewBox="0 0 3 3"><path d="M2.2 0.1 L0.4 1.4 L2.2 2.7 Z" fill="#444"/></svg>
<svg style="left:1001px;top:524.4px" width="3" height="3" viewBox="0 0 3 3"><path d="M0.5 0.1 L2.3 1.4 L0.5 2.7 Z" fill="#444"/></svg>
<div class="t" style="left:106.00px;top:539px;font-size:5.78px;line-height:8px;color:#4a4f5a;font-weight:normal;">Ответственное лицо:</div>
<svg style="left:321.60px;top:541.32px" width="4" height="3" viewBox="0 0 4 3"><path d="M0.2 0.2 H3.0 L1.6 2.0 Z" fill="#444"/></svg>
<svg style="left:331.30px;top:539.32px" width="6" height="6" viewBox="0 0 6 6"><path d="M0.4 2.0 H3.4 V5.2 H0.4 Z M2.0 2.0 V0.5 H5.2 V3.6 H3.4" stroke="#555" stroke-width="0.65" fill="none"/></svg>
</div></body></html>
